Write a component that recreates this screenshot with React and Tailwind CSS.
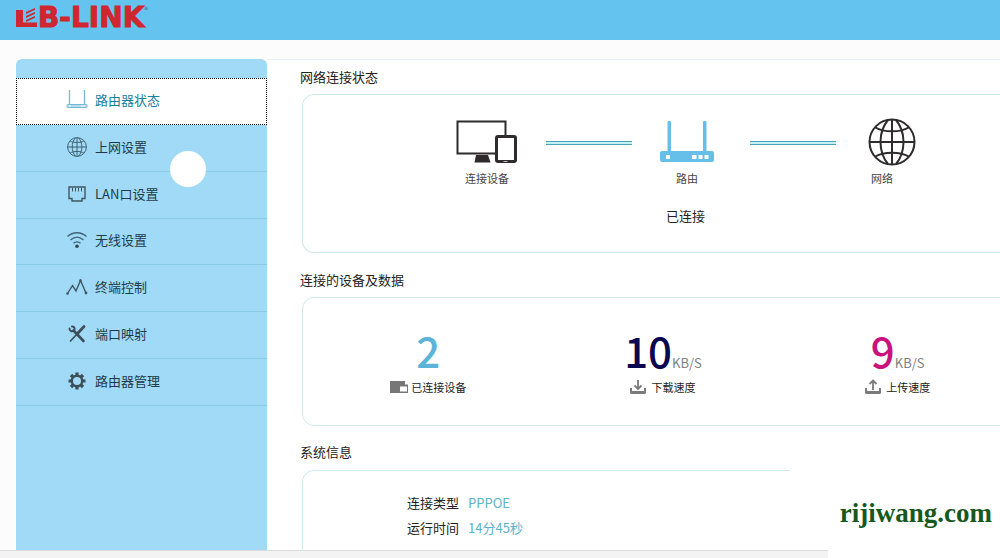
import { useState } from "react";
import clsx from "clsx";

const RouterSmallIcon = () => (
  <svg width="22" height="20" viewBox="0 0 22 20" fill="none" stroke="#74b9d6">
    <path d="M3.5 0v15M18.5 0v15" strokeWidth="1.3" />
    <rect x="1" y="14.5" width="20" height="3" rx="1" fill="#b5dcec" />
    <path d="M3 16h2M15 16h4" stroke="#fff" />
  </svg>
);

const GlobeIcon = ({ size, color, strokeWidth }) => (
  <svg width={size} height={size} viewBox="0 0 48 48" fill="none" stroke={color} strokeWidth={strokeWidth}>
    <circle cx="24" cy="24" r="22.5" />
    <path d="M24 1.5v45M1.5 24h45" />
    <path d="M20 2C10 14 10 34 20 46M28 2c10 12 10 32 0 44" />
    <path d="M7.500 9.500c8 5 25 5 33 0M7.500 38.500c8-5 25-5 33 0" />
  </svg>
);

const LanIcon = () => (
  <svg width="18" height="18" viewBox="0 0 18 18" fill="none" stroke="#3f5763" strokeWidth="1.4">
    <path d="M1 2h16v11.500h-3V16H4v-2.500H1z" />
    <path d="M4.500 3v3.500M7.500 3v3.500M10.500 3v3.500M13.500 3v3.500" strokeWidth="1" />
  </svg>
);

const WifiIcon = () => (
  <svg width="20" height="18" viewBox="0 0 20 18" fill="none" stroke="#3f6273" strokeWidth="1.3">
    <path d="M.5 5.500c5.500-5 13.500-5 19 0M3.500 9c4-3.500 9-3.500 13 0M6.500 12.300c2-1.800 5-1.800 7 0" />
    <circle cx="10" cy="15.300" r="1.800" fill="#2f4653" stroke="none" />
  </svg>
);

const PulseIcon = () => (
  <svg width="22" height="18" viewBox="0 0 22 18" fill="none" stroke="#3f5763" strokeWidth="1.4">
    <path d="M1.500 15.500 6.500 7.500 10 13 14.500 2.500 20 15" />
    <g fill="#3f5763" stroke="none">
      <circle cx="1.500" cy="15.500" r="1.300" />
      <circle cx="14.500" cy="2.500" r="1.300" />
      <circle cx="20" cy="15" r="1.400" />
    </g>
  </svg>
);

const ToolsIcon = () => (
  <svg width="18" height="18" viewBox="0 0 18 18" fill="none" stroke="#3d4f59" strokeLinecap="round">
    <path d="M5.500 5.500 15.500 16" strokeWidth="2.600" />
    <path d="M4 1.500c3 0 3.500 3 1.500 4.500-2 1-4-.5-4-2.500" strokeWidth="1.900" />
    <path d="M16 1.500 10 8" strokeWidth="2.800" />
    <path d="M9 9 2.500 16" strokeWidth="1.700" />
  </svg>
);

const GearIcon = () => (
  <svg width="18" height="18" viewBox="-9 -9 18 18" fill="none" stroke="#3d4f59">
    <circle r="5.200" strokeWidth="2.400" />
    <path
      d="M0-8.500v3M0 5.500v3M-8.500 0h3M5.500 0h3M-6-6l2 2M4 4l2 2M-6 6l2-2M4-4l2-2"
      strokeWidth="3.200"
    />
  </svg>
);

const DevicesIcon = () => (
  <svg width="62" height="44" viewBox="0 0 62 44" fill="none" stroke="#2d2b2c">
    <path d="M40 33.500H1.500v-32h48V15" strokeWidth="2" />
    <path d="M20 35h12l2.500 7.500h-16z" fill="#2d2b2c" stroke="none" />
    <rect x="40.500" y="16.500" width="19" height="25" rx="1.500" strokeWidth="3" />
    <path d="M47.500 41.500h4" stroke="#bbb" />
  </svg>
);

const RouterIcon = () => (
  <svg width="54" height="42" viewBox="0 0 54 42" fill="#66bfe8">
    <rect x="7.500" y="0" width="3.500" height="32" rx="1" />
    <rect x="43" y="0" width="3.500" height="32" rx="1" />
    <rect x="0" y="30" width="54" height="11" rx="2" />
    <g fill="#fff">
      <rect x="6" y="34" width="4" height="4" />
      <rect x="32" y="34" width="4.500" height="4" />
      <rect x="38.500" y="34" width="4" height="4" />
      <rect x="44.500" y="34" width="4" height="4" />
    </g>
  </svg>
);

const DeviceCountIcon = () => (
  <svg width="18" height="12" viewBox="0 0 18 12">
    <path d="M0 0h15v3.500h3V12H0z" fill="#777" />
    <rect x="10" y="5.500" width="7" height="5" fill="#fff" />
  </svg>
);

const TransferIcon = ({ up }) => (
  <svg width="16" height="16" viewBox="0 0 16 16" fill="none" stroke="#7b7b7b">
    <path d="M1 9v4.500h14V9" strokeWidth="2" />
    <path d="M1 13.500h14" strokeWidth="3" />
    <path d={up ? "M8 11V2M4.500 5 8 1.500 11.500 5" : "M8 1v9M4.500 6.500 8 10 11.500 6.500"} strokeWidth="1.800" />
  </svg>
);

const Logo = () => (
  <a href="#" aria-label="LB-LINK" className="flex items-center text-[#cf2630]">
    <svg width="22" height="20" viewBox="0 0 22 20" fill="currentColor">
      <path d="M0 2h7v12.500h14V19H0z" />
      <path d="M10 4 19 0v1.800L10 6zM10 8 19 4v1.800L10 10zM10 12 19 8v1.800L10 14z" />
    </svg>
    <span className="font-['DejaVu_Sans'] text-[28px] leading-8 font-bold [-webkit-text-stroke:1px_currentColor]">
      B-LINK
    </span>
    <span className="mb-4 text-[8px] text-[#3d6f8f]">®</span>
  </a>
);

const menu = [
  { label: "路由器状态", icon: <RouterSmallIcon /> },
  { label: "上网设置", icon: <GlobeIcon size={20} color="#3f6273" strokeWidth={2.4} /> },
  { label: "LAN口设置", icon: <LanIcon /> },
  { label: "无线设置", icon: <WifiIcon /> },
  { label: "终端控制", icon: <PulseIcon /> },
  { label: "端口映射", icon: <ToolsIcon /> },
  { label: "路由器管理", icon: <GearIcon /> },
];

const stats = [
  { value: "2", label: "已连接设备", color: "text-[#5cb4d8]", icon: <DeviceCountIcon />, gap: "gap-[3px]" },
  { value: "10", unit: "KB/S", label: "下载速度", color: "text-[#0b0750]", icon: <TransferIcon />, gap: "gap-[5px]" },
  { value: "9", unit: "KB/S", label: "上传速度", color: "text-[#c9127d]", icon: <TransferIcon up />, gap: "gap-[5px]" },
];

const info = [
  { label: "连接类型", value: "PPPOE" },
  { label: "运行时间", value: "14分45秒" },
];

const Sidebar = () => {
  const [active, setActive] = useState(0);

  return (
    <nav className="relative w-[251px] shrink-0 rounded-t-md bg-[#a0daf7] pt-[19px]">
      <ul className="grid h-[328px] grid-rows-7">
        {menu.map((item, index) => (
          <li key={item.label} className="flex">
            <button
              type="button"
              onClick={() => setActive(index)}
              className={clsx(
                "flex w-full items-center gap-[7px] border-b pb-[2px] text-left",
                index === active
                  ? "border border-dotted border-black bg-white pl-[49px] text-[#16819f]"
                  : "border-[#8acbe8] pl-[50px] text-[#1f3a48]"
              )}
            >
              <span className="flex w-[22px] justify-center">{item.icon}</span>
              {item.label}
            </button>
          </li>
        ))}
      </ul>
      {/* touch pointer */}
      <span className="absolute top-[92px] left-[154px] size-9 rounded-full bg-white" />
    </nav>
  );
};

const Link = ({ className }) => (
  <div className={clsx("mt-6 h-1 w-[86px] border-y border-[#4ba3b8] bg-[#c5f0f3]", className)} />
);

const Node = ({ icon, label, className }) => (
  <div className="flex flex-col items-center">
    <div className="flex h-[50px] items-center">{icon}</div>
    <span className={clsx("mt-[3px] text-[11px] leading-4 text-[#444]", className)}>{label}</span>
  </div>
);

const App = () => {
  return (
    <div className="relative flex min-h-screen flex-col overflow-hidden bg-[#fcfcfc] font-['Noto_Sans_CJK_SC',sans-serif] text-[13px] leading-5 text-[#222]">
      <header className="flex h-10 items-start bg-[#65c3ef] pl-4">
        <Logo />
      </header>

      <div className="flex flex-1 pt-[19px] pl-4">
        <Sidebar />

        <main className="flex min-w-0 flex-1 flex-col border-t border-[#e3f3f3] bg-white pl-[33px]">
          <h2 className="mt-[7px]">网络连接状态</h2>
          <section className="mt-[7px] ml-[2px] h-[159px] rounded-l-xl border border-r-0 border-[#cfe9ea] pt-[22px] pl-[153px]">
            <div className="flex items-start">
              <Node icon={<DevicesIcon />} label="连接设备" />
              <Link className="mr-7 ml-7" />
              <Node icon={<RouterIcon />} label="路由" />
              <Link className="mr-8 ml-9" />
              <Node
                icon={<GlobeIcon size={48} color="#2d2b2c" strokeWidth={2} />}
                label="网络"
                className="pr-5"
              />
            </div>
            <p className="mt-5 pl-[210px]">已连接</p>
          </section>

          <h2 className="mt-[17px]">连接的设备及数据</h2>
          <section className="mt-[7px] -mr-4 ml-[2px] grid h-[129px] grid-cols-3 rounded-l-xl border border-[#d3e8ea] pt-[29px] pl-2">
            {stats.map((stat) => (
              <div key={stat.label} className="flex flex-col items-center">
                <div className="flex h-[50px] items-baseline">
                  <span className={clsx("text-[42px] leading-[46px] font-medium", stat.color)}>{stat.value}</span>
                  {stat.unit && <span className="text-[#808080]">{stat.unit}</span>}
                </div>
                <div className={clsx("flex items-center text-[11px]", stat.gap)}>
                  {stat.icon}
                  {stat.label}
                </div>
              </div>
            ))}
          </section>

          <h2 className="mt-4">系统信息</h2>
          <section className="mt-2 mr-[210px] ml-[2px] flex-1 rounded-tl-xl border-t border-l border-[#cfecee] pt-[22px] pl-[104px]">
            <dl className="grid grid-cols-[auto_1fr] gap-x-[9px] gap-y-[5px]">
              {info.map((row) => (
                <div key={row.label} className="contents">
                  <dt>{row.label}</dt>
                  <dd className="text-[#5ab3cb]">{row.value}</dd>
                </div>
              ))}
            </dl>
          </section>
        </main>
      </div>

      <footer className="h-2 border-t border-[#dcdcdc] bg-[#f3f3f3]" />

      {/* site mark over the bottom right corner */}
      <div className="absolute right-0 bottom-0 flex h-[70px] w-[172px] justify-end bg-white pt-2 pr-2 font-['Liberation_Serif',serif] text-[27px] leading-[34px] font-bold text-[#17591c]">
        rijiwang.com
      </div>
    </div>
  );
};

export default App;
